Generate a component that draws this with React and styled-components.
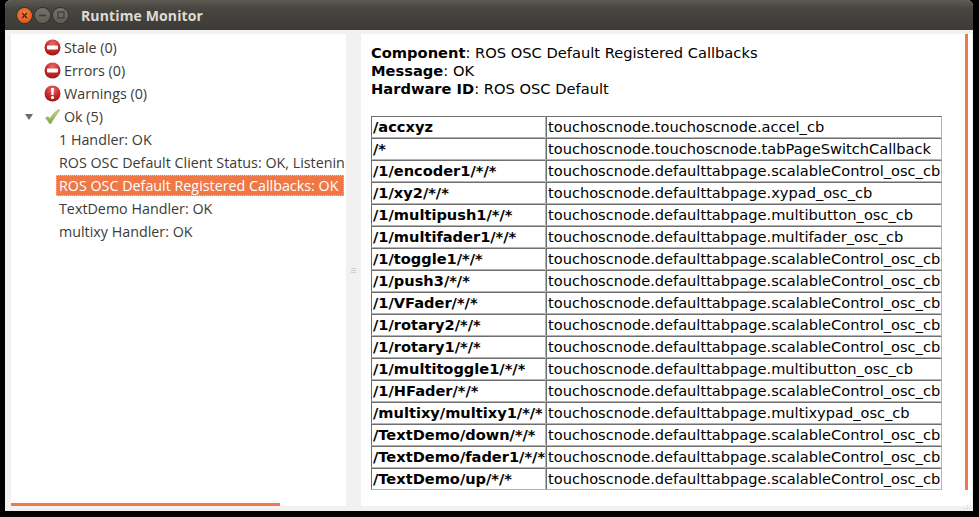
import React from 'react'
import styled, { createGlobalStyle } from 'styled-components'

const GlobalStyle = createGlobalStyle`
  html, body {
    margin: 0;
    padding: 0;
    background: #000;
  }
`
const Screen = styled.div`
  width: 979px;
  height: 517px;
  padding: 0 6px 6px 5px;
  box-sizing: border-box;
  background: #000;
  overflow: hidden;
`
const Window = styled.div`
  display: flex;
  flex-direction: column;
  height: 100%;
  background: #f2f1f0;
  border-radius: 6px 6px 0 0;
  overflow: hidden;
`
const TitleBar = styled.div`
  display: flex;
  align-items: center;
  flex: none;
  height: 30px;
  padding-left: 12px;
  background: linear-gradient(180deg, #5c5a52 0%, #47453f 30%, #3c3b37 100%);
`
const Buttons = styled.div`
  display: flex;
  gap: 3px;
  margin-right: 13px;
`
const WinButton = styled.div`
  display: flex;
  align-items: center;
  justify-content: center;
  width: 15px;
  height: 15px;
  border-radius: 50%;
  box-shadow: 0 0 0 1px #34332e;
  background: ${p => p.$close
    ? 'radial-gradient(circle at 50% 35%, #f5803e, #dc4c17)'
    : 'linear-gradient(180deg, #74726b, #5f5d56)'};
`
const Title = styled.div`
  font: bold 14px "Open Sans", sans-serif;
  letter-spacing: 0.13px;
  color: #dfdbd2;
`
const Body = styled.div`
  display: flex;
  flex: 1;
  min-height: 0;
  padding: 4px 1px 5px 6px;
`
const TreePane = styled.div`
  display: flex;
  flex-direction: column;
  flex: none;
  width: 335px;
  background: #fff;
`
const Tree = styled.div`
  flex: 1;
  padding-top: 2px;
  overflow: hidden;
`
const Row = styled.div`
  display: flex;
  align-items: center;
  height: 23px;
  margin-left: ${p => p.$indent}px;
  white-space: nowrap;
  overflow: hidden;
  font: 14.3px "Open Sans", sans-serif;
  color: #3c3b37;
`
const SelectedRow = styled(Row)`
  height: 21px;
  margin: 1px 2px 1px 45px;
  padding-left: 3px;
  background: #f07746;
  outline: 1px dotted #f9b99d;
  outline-offset: -1px;
  color: #fff;
`
const Expander = styled.span`
  width: 0;
  height: 0;
  margin: 0 11px 0 14px;
  border-left: 4px solid transparent;
  border-right: 4px solid transparent;
  border-top: 6px solid #6d6b64;
`
const IconSlot = styled.span`
  display: flex;
  width: 20px;
`
const HScroll = styled.div`
  flex: none;
  width: 269px;
  height: 3px;
  background: #f0784a;
`
const Splitter = styled.div`
  display: flex;
  flex-direction: column;
  flex: none;
  align-items: center;
  justify-content: center;
  gap: 1px;
  width: 15px;
`
const GripLine = styled.span`
  width: 5px;
  height: 1px;
  background: #d0cfcc;
`
const DetailPane = styled.div`
  display: flex;
  flex: 1;
  min-width: 0;
  position: relative;
  background: #fff;
`
const Detail = styled.div`
  flex: 1;
  padding: 10px 0 0 10px;
  font: 14.67px/18px "DejaVu Sans", sans-serif;
  color: #000;
`
const Info = styled.div`
  margin-bottom: 18px;
  white-space: nowrap;
`
const Table = styled.table`
  width: 571px;
  table-layout: fixed;
  border-collapse: separate;
  border-spacing: 0;
`
const Cell = styled.td`
  height: 22px;
  padding: 0 0 0 1px;
  box-sizing: border-box;
  border-style: solid;
  border-width: 1px;
  border-color: #6e6e6e #b4b4b4 #b4b4b4 #6e6e6e;
  font-size: 14.6px;
  font-weight: ${p => p.$bold ? 'bold' : 'normal'};
  white-space: nowrap;
  overflow: hidden;
  line-height: 18px;
`
const NameCol = styled.col`
  width: 175px;
`
const VScrollTrack = styled.div`
  flex: none;
  width: 7px;
`
const VScrollThumb = styled.div`
  width: 3px;
  height: 456px;
  background: #f0784a;
`
const Grip = styled.svg`
  position: absolute;
  right: 0;
  bottom: -5px;
`

const StopIcon = () => (
  <svg width="17" height="17" viewBox="0 0 17 17">
    <defs>
      <radialGradient id="red" cx="50%" cy="25%" r="80%">
        <stop offset="0" stopColor="#e86a6a" />
        <stop offset="0.55" stopColor="#c62a2c" />
        <stop offset="1" stopColor="#960f14" />
      </radialGradient>
    </defs>
    <circle cx="8.5" cy="8.5" r="8" fill="url(#red)" />
    <rect x="3" y="6.500" width="11" height="4" rx="1" fill="#fff" />
  </svg>
)

const WarnIcon = () => (
  <svg width="17" height="17" viewBox="0 0 17 17">
    <circle cx="8.5" cy="8.5" r="8" fill="url(#red)" />
    <path d="M7 3h3l-.5 7h-2z" fill="#fff" />
    <circle cx="8.5" cy="12.5" r="1.6" fill="#fff" />
  </svg>
)

const CheckIcon = () => (
  <svg width="17" height="17" viewBox="0 0 17 17">
    <defs>
      <linearGradient id="green" x1="0" y1="0" x2="0" y2="1">
        <stop offset="0" stopColor="#c4dc84" />
        <stop offset="1" stopColor="#7fa83c" />
      </linearGradient>
    </defs>
    <path
      d="M1.500 10l2.500-1.500 2 2.500C8 7 11 3.500 15 1.500l.5 1C12.500 6 9.500 11 7 15.500H5.500C4.500 13.500 3 11.500 1.500 10z"
      fill="url(#green)"
      stroke="#8aa85a"
      strokeWidth="0.6"
    />
  </svg>
)

const statusRows = [
  { label: 'Stale (0)', icon: <StopIcon /> },
  { label: 'Errors (0)', icon: <StopIcon /> },
  { label: 'Warnings (0)', icon: <WarnIcon /> },
]

const handlers = [
  '1 Handler: OK',
  'ROS OSC Default Client Status: OK, Listenin',
  'ROS OSC Default Registered Callbacks: OK',
  'TextDemo Handler: OK',
  'multixy Handler: OK',
]

const scalable = 'touchoscnode.defaulttabpage.scalableControl_osc_cb'

const callbacks = [
  ['/accxyz', 'touchoscnode.touchoscnode.accel_cb'],
  ['/*', 'touchoscnode.touchoscnode.tabPageSwitchCallback'],
  ['/1/encoder1/*/*', scalable],
  ['/1/xy2/*/*', 'touchoscnode.defaulttabpage.xypad_osc_cb'],
  ['/1/multipush1/*/*', 'touchoscnode.defaulttabpage.multibutton_osc_cb'],
  ['/1/multifader1/*/*', 'touchoscnode.defaulttabpage.multifader_osc_cb'],
  ['/1/toggle1/*/*', scalable],
  ['/1/push3/*/*', scalable],
  ['/1/VFader/*/*', scalable],
  ['/1/rotary2/*/*', scalable],
  ['/1/rotary1/*/*', scalable],
  ['/1/multitoggle1/*/*', 'touchoscnode.defaulttabpage.multibutton_osc_cb'],
  ['/1/HFader/*/*', scalable],
  ['/multixy/multixy1/*/*', 'touchoscnode.defaulttabpage.multixypad_osc_cb'],
  ['/TextDemo/down/*/*', scalable],
  ['/TextDemo/fader1/*/*', scalable],
  ['/TextDemo/up/*/*', scalable],
]

export default function App() {
  return (
    <Screen>
      <GlobalStyle />
      <Window>
        <TitleBar>
          <Buttons>
            <WinButton $close>
              <svg width="7" height="7" viewBox="0 0 7 7">
                <path d="M1 1l5 5M6 1l-5 5" stroke="#4a2412" strokeWidth="1.3" />
              </svg>
            </WinButton>
            <WinButton>
              <svg width="7" height="7" viewBox="0 0 7 7">
                <path d="M0 3.500h7" stroke="#3c3b37" strokeWidth="1.300" />
              </svg>
            </WinButton>
            <WinButton>
              <svg width="8" height="8" viewBox="0 0 8 8">
                <rect x="1" y="1" width="6" height="6" fill="none" stroke="#3c3b37" strokeWidth="1.200" />
              </svg>
            </WinButton>
          </Buttons>
          <Title>Runtime Monitor</Title>
        </TitleBar>
        <Body>
          <TreePane>
            <Tree>
              {statusRows.map(row => (
                <Row key={row.label} $indent={33}>
                  <IconSlot>{row.icon}</IconSlot>
                  {row.label}
                </Row>
              ))}
              <Row $indent={0}>
                <Expander />
                <IconSlot><CheckIcon /></IconSlot>
                Ok (5)
              </Row>
              {handlers.map((name, i) => (
                i === 2
                  ? <SelectedRow key={name}>{name}</SelectedRow>
                  : <Row key={name} $indent={48}>{name}</Row>
              ))}
            </Tree>
            <HScroll />
          </TreePane>
          <Splitter>
            <GripLine />
            <GripLine />
            <GripLine />
          </Splitter>
          <DetailPane>
            <Detail>
              <Info>
                <div><b>Component</b>: ROS OSC Default Registered Callbacks</div>
                <div><b>Message</b>: OK</div>
                <div><b>Hardware ID</b>: ROS OSC Default</div>
              </Info>
              <Table>
                <colgroup>
                  <NameCol />
                  <col />
                </colgroup>
                <tbody>
                  {callbacks.map(([path, callback]) => (
                    <tr key={path}>
                      <Cell $bold>{path}</Cell>
                      <Cell>{callback}</Cell>
                    </tr>
                  ))}
                </tbody>
              </Table>
            </Detail>
            <VScrollTrack>
              <VScrollThumb />
            </VScrollTrack>
            <Grip width="10" height="10" viewBox="0 0 10 10">
              <path d="M8 1h1v1H8zM5 4h1v1H5zM8 4h1v1H8zM2 7h1v1H2zM5 7h1v1H5zM8 7h1v1H8z" fill="#cfcdc9" />
            </Grip>
          </DetailPane>
        </Body>
      </Window>
    </Screen>
  )
}
